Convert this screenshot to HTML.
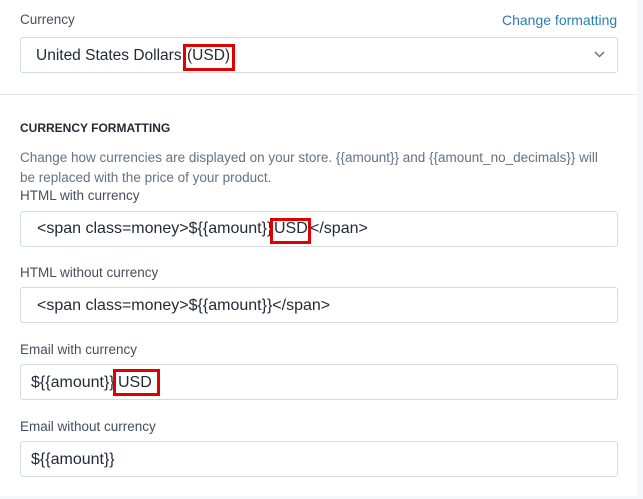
<!DOCTYPE html>
<html><head><meta charset="utf-8"><style>
*{margin:0;padding:0;box-sizing:border-box}
body{width:643px;height:499px;background:#f4f6f8;position:relative;overflow:hidden;font-family:"Liberation Sans",sans-serif;color:#212b36}
.card{position:absolute;left:0;top:0;width:637px;height:496px;background:#fff}
.t{position:absolute;white-space:nowrap}
.lbl{font-size:13.5px;color:#454f5b}
.box{position:absolute;left:20px;width:598px;height:36px;border:1px solid #d3dbe2;border-radius:3px;background:#fff}
.val{font-size:16px;color:#212b36}
.red{position:absolute;border:3px solid #e00000}
</style></head><body>
<div class="card">
<div class="t lbl" style="left:20px;top:12px">Currency</div>
<div class="t" style="left:502px;top:12px;font-size:14px;color:#2a7fb0">Change formatting</div>
<div class="box" style="top:37px"></div>
<div class="t val" style="left:36px;top:47px;font-size:15.5px">United States Dollars</div>
<div class="t val" style="left:187px;top:47px;font-size:15.5px">(USD)</div>
<svg style="position:absolute;left:593px;top:50px" width="13" height="9" viewBox="0 0 13 9"><path d="M2 2l4.5 4.5L11 2" fill="none" stroke="#637381" stroke-width="1.5"/></svg>
<div class="red" style="left:183px;top:44px;width:52px;height:27px"></div>
<div style="position:absolute;left:0;top:94px;width:637px;height:1px;background:#e6e9ec"></div>
<div class="t" style="left:20px;top:121px;font-size:12px;font-weight:bold;color:#212b36">CURRENCY FORMATTING</div>
<div class="t" style="left:20px;top:148px;font-size:13.5px;color:#637381;line-height:20px">Change how currencies are displayed on your store. {{amount}} and {{amount_no_decimals}} will<br>be replaced with the price of your product.</div>
<div class="t lbl" style="left:20px;top:188px">HTML with currency</div>
<div class="box" style="top:211px"></div>
<div class="t val" style="left:37px;top:220px">&lt;span class=money&gt;${{amount}}</div>
<div class="t val" style="left:274px;top:220px">USD</div>
<div class="t val" style="left:310px;top:220px">&lt;/span&gt;</div>
<div class="red" style="left:270px;top:218px;width:41px;height:26px"></div>
<div class="t lbl" style="left:20px;top:265px">HTML without currency</div>
<div class="box" style="top:287px"></div>
<div class="t val" style="left:37px;top:297px">&lt;span class=money&gt;${{amount}}&lt;/span&gt;</div>
<div class="t lbl" style="left:20px;top:342px">Email with currency</div>
<div class="box" style="top:364px"></div>
<div class="t val" style="left:31px;top:374px">${{amount}}</div>
<div class="t val" style="left:118px;top:374px">USD</div>
<div class="red" style="left:113px;top:369px;width:47px;height:27px"></div>
<div class="t lbl" style="left:20px;top:419px">Email without currency</div>
<div class="box" style="top:441px"></div>
<div class="t val" style="left:31px;top:451px">${{amount}}</div>
</div>
</body></html>
